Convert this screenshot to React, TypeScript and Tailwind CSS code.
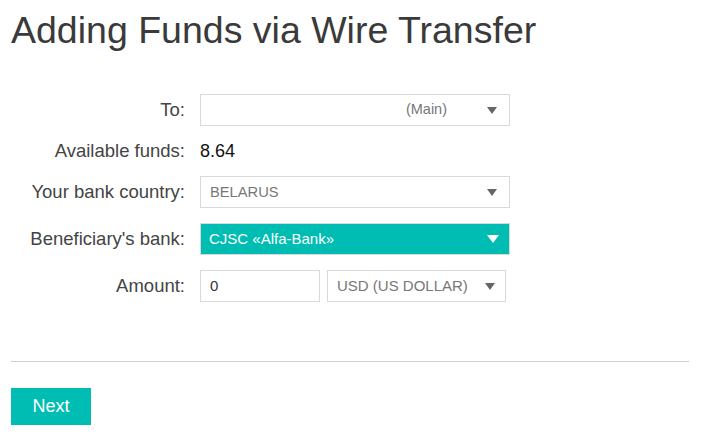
import React from "react";

function Arrow({ white = false }: { white?: boolean }) {
  return white ? (
    <svg width="12" height="8" viewBox="0 0 12 8" className="shrink-0">
      <path d="M0 0 L12 0 L6 8 Z" fill="#ffffff" />
    </svg>
  ) : (
    <svg width="10" height="7" viewBox="0 0 10 7" className="shrink-0">
      <path d="M0 0 L10 0 L5 7 Z" fill="#666666" />
    </svg>
  );
}

function Row({ label, children, h = "h-[32px]" }: { label: string; children: React.ReactNode; h?: string }) {
  return (
    <div className={`flex items-center gap-[15px] ${h}`}>
      <div className="w-[174px] text-right text-[18.5px] text-[#444] whitespace-nowrap">{label}</div>
      {children}
    </div>
  );
}

export default function App() {
  return (
    <div className="bg-white w-[719px] h-[442px] px-[11px] pt-[10px] overflow-hidden" style={{ fontFamily: '"Liberation Sans", Arial, sans-serif' }}>
      <h1 className="text-[37.5px] leading-[40px] text-[#3a3a3a] font-normal whitespace-nowrap">Adding Funds via Wire Transfer</h1>
      <div className="mt-[44px] flex flex-col gap-[15px]">
        <Row label="To:">
          <div className="w-[310px] h-[32px] border border-[#d9d9d9] flex items-center justify-end pr-[12px] text-[14.5px] text-[#777]">
            <span className="mr-[40px]">(Main)</span>
            <Arrow />
          </div>
        </Row>
        <Row label="Available funds:" h="h-[20px]">
          <div className="text-[18px] text-[#111]">8.64</div>
        </Row>
        <Row label="Your bank country:">
          <div className="w-[310px] h-[32px] border border-[#d9d9d9] flex items-center justify-between pl-[9px] pr-[12px] text-[14.7px] text-[#777]">
            <span>BELARUS</span>
            <Arrow />
          </div>
        </Row>
        <Row label="Beneficiary's bank:">
          <div className="w-[310px] h-[32px] bg-[#00bdb3] border border-[#d9d9d9] flex items-center justify-between pl-[8px] pr-[10px] text-[15px] text-white">
            <span>CJSC «Alfa-Bank»</span>
            <Arrow white />
          </div>
        </Row>
        <Row label="Amount:">
          <div className="flex gap-[7px]">
            <div className="w-[120px] h-[32px] border border-[#d9d9d9] flex items-center pl-[9px] text-[15px] text-[#333]">0</div>
            <div className="w-[179px] h-[32px] border border-[#d9d9d9] flex items-center justify-between pl-[9px] pr-[10px] text-[15px] text-[#777] whitespace-nowrap">
              <span>USD (US DOLLAR)</span>
              <Arrow />
            </div>
          </div>
        </Row>
      </div>
      <div className="mt-[59px] w-[678px] h-px bg-[#d0d0d0]" />
      <button className="mt-[26px] w-[80px] h-[37px] bg-[#00bdb3] text-white text-[18px] flex items-center justify-center">Next</button>
    </div>
  );
}
